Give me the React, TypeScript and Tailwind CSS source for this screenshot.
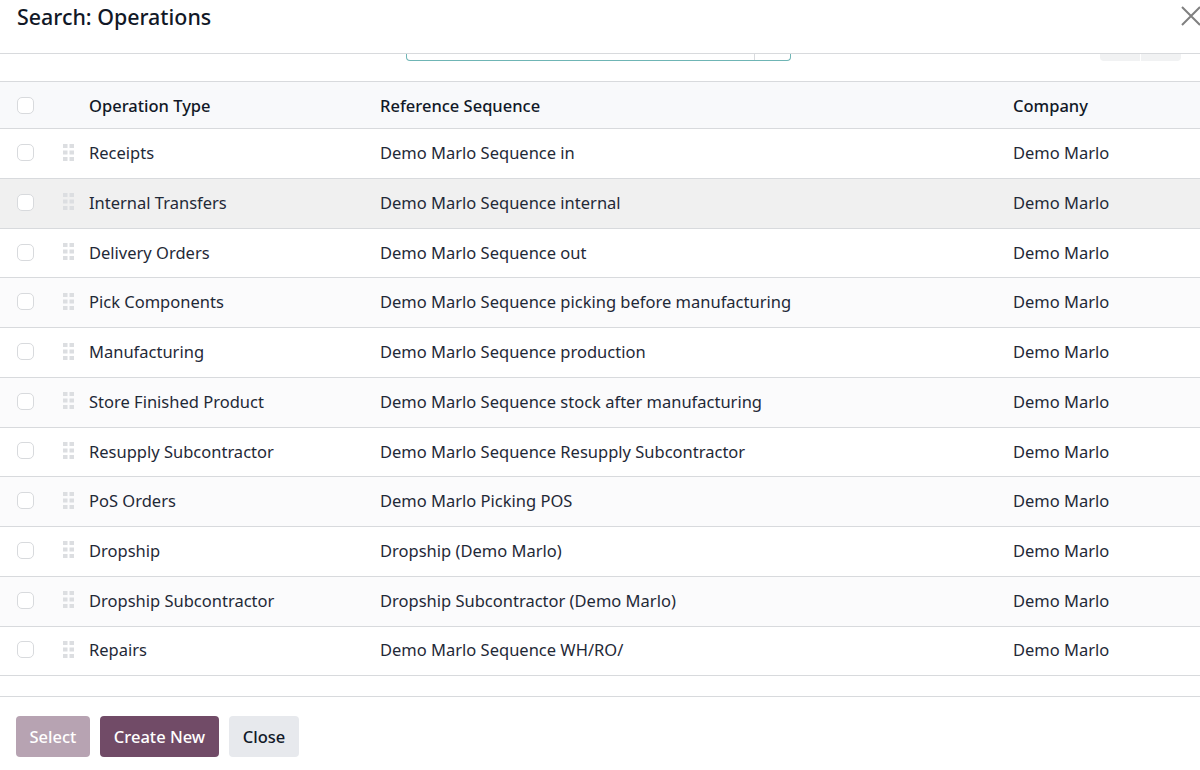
import React from 'react';

const rows = [
  ['Receipts', 'Demo Marlo Sequence in'],
  ['Internal Transfers', 'Demo Marlo Sequence internal'],
  ['Delivery Orders', 'Demo Marlo Sequence out'],
  ['Pick Components', 'Demo Marlo Sequence picking before manufacturing'],
  ['Manufacturing', 'Demo Marlo Sequence production'],
  ['Store Finished Product', 'Demo Marlo Sequence stock after manufacturing'],
  ['Resupply Subcontractor', 'Demo Marlo Sequence Resupply Subcontractor'],
  ['PoS Orders', 'Demo Marlo Picking POS'],
  ['Dropship', 'Dropship (Demo Marlo)'],
  ['Dropship Subcontractor', 'Dropship Subcontractor (Demo Marlo)'],
  ['Repairs', 'Demo Marlo Sequence WH/RO/'],
];

const Check = () => <div className="w-[17px] h-[17px] rounded-[5px] border border-[#d8dadd] bg-white" />;

const Grip = () => (
  <svg width="12" height="18" viewBox="0 0 12 18" className="fill-[#dcdee1]">
    <rect x="0" y="0" width="4.5" height="4" />
    <rect x="6.5" y="0" width="4.5" height="4" />
    <rect x="0" y="6.5" width="4.5" height="4" />
    <rect x="6.5" y="6.5" width="4.5" height="4" />
    <rect x="0" y="13" width="4.5" height="4" />
    <rect x="6.5" y="13" width="4.5" height="4" />
  </svg>
);

const App: React.FC = () => {
  return (
    <div className="w-[1200px] h-[770px] overflow-hidden bg-white flex flex-col text-[#1f2937] text-[16.5px] font-['Noto_Sans','Open_Sans',sans-serif]">
      <div className="h-[54px] shrink-0 border-b border-[#d8dadd] flex justify-between pl-[17px]">
        <h4 className="text-[21.4px] font-medium text-[#111827] leading-[34px]">Search: Operations</h4>
        <svg width="20" height="20" viewBox="0 0 20 20" className="mt-[6px] -mr-[1px] stroke-[#808080]" strokeWidth="2" fill="none">
          <path d="M1 1 L19 19 M19 1 L1 19" />
        </svg>
      </div>

      <div className="h-[27px] shrink-0 flex items-start pl-[406px]">
        <div className="w-[385px] h-[7px] border border-t-0 border-[#6fb5b5] rounded-b-[4px] flex justify-end">
          <div className="w-[36px] border-l border-[#d8dadd]" />
        </div>
        <div className="ml-[309px] flex gap-px">
          <div className="w-[40px] h-[7px] bg-[#f1f2f3] rounded-bl-[4px]" />
          <div className="w-[40px] h-[7px] bg-[#f1f2f3] rounded-br-[4px]" />
        </div>
      </div>

      <div className="h-[48.3125px] shrink-0 flex items-center border-y border-[#d8dadd] bg-[#f8f9fb] font-medium text-[#111827]">
        <div className="w-[89px] pl-[17px] shrink-0"><Check /></div>
        <div className="w-[291px] shrink-0 mt-[2px]">Operation Type</div>
        <div className="w-[633px] shrink-0 mt-[2px]">Reference Sequence</div>
        <div className="mt-[2px]">Company</div>
      </div>

      {rows.map(([name, seq], i) => (
        <div
          key={name}
          className={`h-[49.72px] shrink-0 flex items-center border-b border-[#d8dadd] ${i === 1 ? 'bg-[#f0f0f0]' : i % 2 === 1 ? 'bg-[#fbfbfc]' : 'bg-white'}`}
        >
          <div className="w-[63px] pl-[17px] shrink-0 -mt-[2px]"><Check /></div>
          <div className="w-[26px] shrink-0 -mt-[2px]"><Grip /></div>
          <div className="w-[291px] shrink-0">{name}</div>
          <div className="w-[633px] shrink-0">{seq}</div>
          <div>Demo Marlo</div>
        </div>
      ))}

      <div className="mt-[20px] border-t border-[#d8dadd] pt-[19px] pl-4 flex gap-[10px] font-medium">
        <button className="h-[41px] w-[74px] pt-px rounded-[4px] bg-[#b7a3b2] text-white">Select</button>
        <button className="h-[41px] w-[119px] pt-px rounded-[4px] bg-[#714b67] text-white">Create New</button>
        <button className="h-[41px] w-[70px] pt-px rounded-[4px] bg-[#e7e9ed] text-[#111827]">Close</button>
      </div>
    </div>
  );
};

export default App;
